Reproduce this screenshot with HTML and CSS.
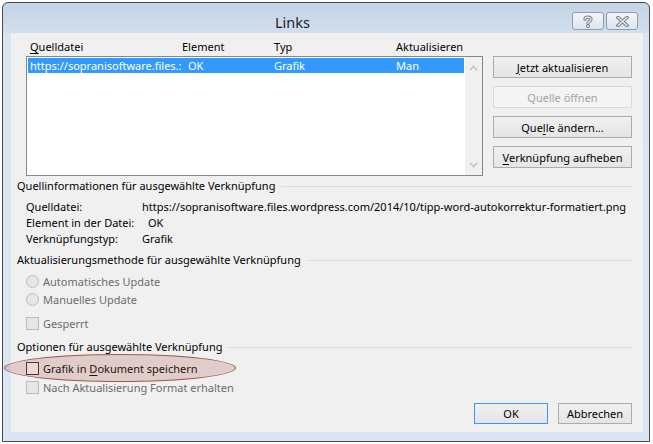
FILE: index.html
```html
<!DOCTYPE html>
<html lang="de">
<head>
<meta charset="utf-8">
<title>Links</title>
<link rel="stylesheet" href="styles.css">
</head>
<body>
<div class="window">
  <div class="titlebar">
    <span class="title">Links</span>
    <div class="tbtns">
      <div class="tbtn">
        <svg width="12" height="13" viewBox="0 0 12 13">
          <path d="M3 4.2 C3 1.6 9 1.4 9 4.2 C9 6.2 6 6.2 6 8.4" fill="none" stroke="#6f7b88" stroke-width="3.2" stroke-linecap="round"/>
          <path d="M3 4.2 C3 1.6 9 1.4 9 4.2 C9 6.2 6 6.2 6 8.4" fill="none" stroke="#f4f6f8" stroke-width="1.2" stroke-linecap="round"/>
          <circle cx="6" cy="11.2" r="1.5" fill="#f4f6f8" stroke="#6f7b88" stroke-width="1"/>
        </svg>
      </div>
      <div class="tbtn">
        <svg width="13" height="11" viewBox="0 0 13 11">
          <path d="M2 1.5 L11 9.5 M11 1.5 L2 9.5" stroke="#6f7b88" stroke-width="3.4" stroke-linecap="square"/>
          <path d="M2 1.5 L11 9.5 M11 1.5 L2 9.5" stroke="#f4f6f8" stroke-width="1.3" stroke-linecap="square"/>
        </svg>
      </div>
    </div>
  </div>
  <div class="client">
    <div class="top">
      <div class="listcol">
        <div class="cols">
          <span class="c1"><u>Q</u>uelldatei</span><span class="c2">Element</span><span class="c3">Typ</span><span class="c4">Aktualisieren</span>
        </div>
        <div class="listbox">
          <div class="items">
            <div class="row sel">
              <span class="c1">https://sopranisoftware.files.:</span><span class="c2 ok">OK</span><span class="c3">Grafik</span><span class="c4">Man</span>
            </div>
          </div>
          <div class="vscroll">
            <svg width="9" height="6" viewBox="0 0 9 6"><path d="M1 5 L4.5 1.5 L8 5" fill="none" stroke="#c2c2c2" stroke-width="1.6"/></svg>
            <svg width="9" height="6" viewBox="0 0 9 6"><path d="M1 1 L4.5 4.5 L8 1" fill="none" stroke="#c2c2c2" stroke-width="1.6"/></svg>
          </div>
        </div>
      </div>
      <div class="btncol">
        <div class="btn"><span><u>J</u>etzt aktualisieren</span></div>
        <div class="btn disabled"><span>Quelle öffnen</span></div>
        <div class="btn"><span>Que<u>l</u>le ändern...</span></div>
        <div class="btn"><span><u>V</u>erknüpfung aufheben</span></div>
      </div>
    </div>

    <div class="group g1"><span>Quellinformationen für ausgewählte Verknüpfung</span></div>
    <div class="info">
      <div class="irow"><span class="lbl">Quelldatei:</span><span>https://sopranisoftware.files.wordpress.com/2014/10/tipp-word-autokorrektur-formatiert.png</span></div>
      <div class="irow"><span class="lbl">Element in der Datei:</span><span class="shift">OK</span></div>
      <div class="irow"><span class="lbl">Verknüpfungstyp:</span><span>Grafik</span></div>
    </div>

    <div class="group g2"><span>Aktualisierungsmethode für ausgewählte Verknüpfung</span></div>
    <div class="opts">
      <div class="opt dis"><span class="radio"></span><span>Automatisches Update</span></div>
      <div class="opt dis"><span class="radio"></span><span>Manuelles Update</span></div>
      <div class="opt dis lock"><span class="check"></span><span>Gesperrt</span></div>
    </div>

    <div class="group g3"><span>Optionen für ausgewählte Verknüpfung</span></div>
    <div class="opts2">
      <div class="opt"><span class="check on"></span><span>Grafik in <u>D</u>okument speichern</span></div>
      <div class="opt dis keep"><span class="check"></span><span>Nach Aktualisierung Format erhalten</span></div>
    </div>

    <div class="footer">
      <div class="btn small default"><span>OK</span></div>
      <div class="btn small"><span>Abbrechen</span></div>
    </div>
  </div>
  <div class="ellipse"></div>
</div>
</body>
</html>
```

FILE: styles.css
```css
* { box-sizing: border-box; }
html, body { margin: 0; padding: 0; background: #ffffff; }
body {
  font-family: "Noto Sans", "DejaVu Sans", sans-serif;
  font-size: 11px;
  color: #000;
}
u { text-decoration: underline; text-underline-offset: 2px; }

.window {
  position: relative;
  margin: 2px 0 0 2px;
  width: 648px;
  height: 440px;
  border: 1px solid #4a4a4a;
  border-radius: 6px 6px 0 0;
  background: linear-gradient(#c3d4e6 0px, #d2dfed 30px, #d9e5f2 31px, #dae6f3 100%);
  display: flex;
  flex-direction: column;
}

.titlebar {
  height: 30px;
  display: flex;
  align-items: flex-start;
  flex: none;
}
.title {
  flex: 1;
  text-align: center;
  padding-left: 10px;
  margin-top: 10px;
  font-size: 14.5px;
  line-height: 18px;
  color: #1e1e1e;
}
.tbtns {
  display: flex;
  gap: 2px;
  margin-top: 9px;
  margin-right: 11px;
}
.tbtn {
  width: 32px;
  height: 18px;
  border: 1px solid #8e9cad;
  border-radius: 3px;
  background: linear-gradient(#f3f6f9, #dde5ed);
  display: flex;
  align-items: center;
  justify-content: center;
}

.client {
  margin: 0 6px 0 8px;
  height: 399px;
  background: #f0f0f0;
  display: flex;
  flex-direction: column;
  padding-bottom: 8px;
}

.top {
  display: flex;
  padding: 6px 0 0 15px;
  gap: 10px;
}
.listcol { width: 457px; }
.cols {
  display: flex;
  height: 16px;
  line-height: 16px;
  padding-left: 4px;
}
.c1 { width: 152px; flex: none; white-space: nowrap; overflow: hidden; }
.c2 { width: 92px; flex: none; }
.c3 { width: 122px; flex: none; }
.c4 { flex: 1; }

.listbox {
  margin-top: 1px;
  height: 120px;
  border: 1px solid #828790;
  background: #fff;
  display: flex;
}
.items { flex: 1; padding: 1px; }
.row {
  display: flex;
  height: 15px;
  line-height: 15px;
  padding-left: 2px;
}
.row.sel { background: #3399ff; color: #fff; }
.row .c1 { width: 152px; }
.ok { padding-left: 6px; }
.vscroll {
  width: 17px;
  flex: none;
  background: #f0f0f0;
  display: flex;
  flex-direction: column;
  justify-content: space-between;
  align-items: center;
  padding: 8px 0 7px;
}
.vscroll svg { display: block; }

.btncol {
  width: 139px;
  margin-top: 17px;
  display: flex;
  flex-direction: column;
  gap: 8px;
}
.btn {
  height: 22px;
  border: 1px solid #acacac;
  background: linear-gradient(#f0f0f0, #e5e5e5);
  display: flex;
  align-items: center;
  justify-content: center;
  white-space: nowrap;
}
.btn.disabled {
  border-color: #d9d9d9;
  background: #f4f4f4;
  color: #a3a3a3;
}
.btn.small { width: 74px; height: 21px; }
.btn.default { border-color: #3399ff; }

.group {
  display: flex;
  align-items: center;
  margin-left: 6px;
  margin-right: 10px;
  line-height: 16px;
  white-space: nowrap;
}
.group::after {
  content: "";
  flex: 1;
  height: 1px;
  background: #dcdcdc;
  margin-left: 6px;
}
.g1 { margin-top: 2px; }
.g2 { margin-top: 5px; }
.g3 { margin-top: 7px; }

.info { margin-top: 5px; padding-left: 15px; }
.irow { display: flex; line-height: 16px; white-space: nowrap; }
.lbl { width: 116px; flex: none; }
.shift { padding-left: 6px; }

.opts { margin-top: 4px; padding-left: 15px; }
.opts2 { margin-top: 4px; padding-left: 15px; }
.opt {
  display: flex;
  align-items: center;
  height: 18px;
  gap: 4px;
  white-space: nowrap;
}
.opt.dis { color: #6d6d6d; }
.opt.lock { margin-top: 6px; }
.opt.keep { margin-top: 1px; }
.radio {
  width: 13px;
  height: 13px;
  border-radius: 50%;
  border: 1px solid #bcbcbc;
  background: #e6e6e6;
  flex: none;
}
.check {
  width: 13px;
  height: 13px;
  border: 1px solid #bcbcbc;
  background: #e6e6e6;
  flex: none;
}
.check.on { border-color: #333; background: #fff; }

.footer {
  margin-top: auto;
  display: flex;
  justify-content: flex-end;
  gap: 10px;
  padding-right: 11px;
}

.ellipse {
  position: absolute;
  left: 1px;
  top: 351px;
  width: 232px;
  height: 28px;
  border-radius: 50%;
  border: 1px solid rgba(140, 70, 60, 0.85);
  background: rgba(170, 80, 70, 0.22);
}
```
